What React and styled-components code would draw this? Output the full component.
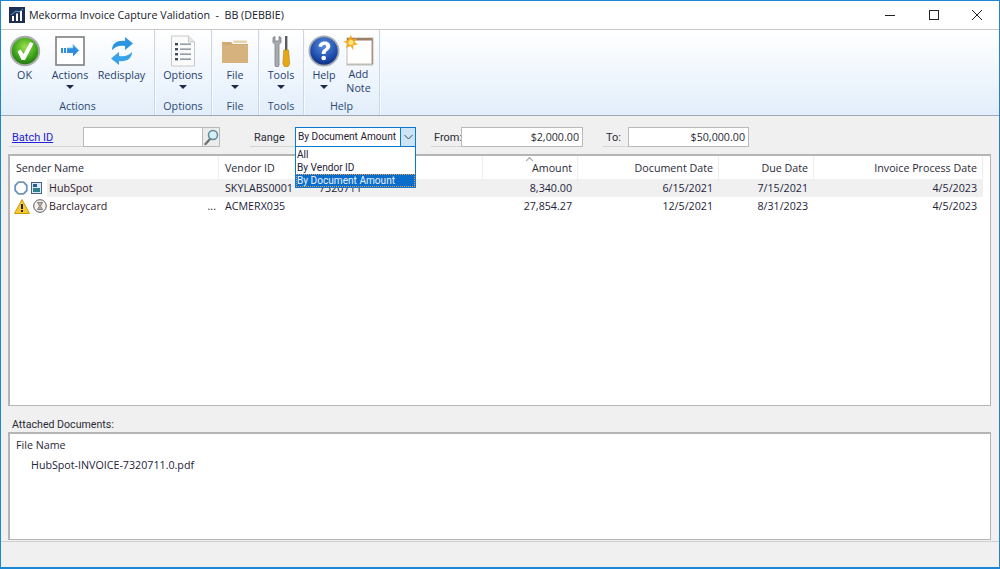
import React from "react";
import styled, { createGlobalStyle } from "styled-components";

const Global = createGlobalStyle`
  html, body { margin: 0; padding: 0; height: 100%; overflow: hidden; }
  body { font-family: "Open Sans", "Noto Sans", "Liberation Sans", sans-serif; font-size: 10.7px; color: #1f2333; }
  * { box-sizing: border-box; }
`;

const Window = styled.div`
  width: 1000px;
  height: 569px;
  display: flex;
  flex-direction: column;
  background: #f0f0f0;
  border: 1px solid #1c86d6;
  border-bottom-width: 2px;
`;

const TitleBar = styled.div`
  height: 29px;
  flex: none;
  display: flex;
  align-items: center;
  padding-left: 8px;
  background: #fff;
  border-bottom: 1px solid #c9c9c9;
`;

const AppTitle = styled.span`
  margin-left: 4px;
  font-size: 10.7px;
  color: #15192b;
  white-space: pre;
`;

const WinButtons = styled.div`
  margin-left: auto;
  display: flex;
  height: 100%;
`;

const WinButton = styled.div`
  width: 43.5px;
  display: flex;
  align-items: center;
  justify-content: center;
`;

const Ribbon = styled.div`
  height: 86px;
  flex: none;
  display: flex;
  background: linear-gradient(#ffffff, #e2eefb);
  border-bottom: 1px solid #9fa8b0;
`;

const Group = styled.div`
  width: ${(p) => p.$w}px;
  display: flex;
  flex-direction: column;
  border-right: 1px solid #cdd7e2;
  box-shadow: 1px 0 0 #f6f9fd;
`;

const Buttons = styled.div`
  height: 65px;
  flex: none;
  display: flex;
`;

const RibbonButton = styled.div`
  width: ${(p) => p.$w}px;
  padding-top: 4px;
  display: flex;
  flex-direction: column;
  align-items: center;
  color: #27406e;
  font-size: 10.7px;
  line-height: 14px;
  text-align: center;
`;

const IconSlot = styled.div`
  height: 34px;
  display: flex;
  align-items: center;
  justify-content: center;
`;

const Caret = styled.div`
  margin-top: 3px;
  width: 0;
  height: 0;
  border-left: 4px solid transparent;
  border-right: 4px solid transparent;
  border-top: 4px solid #1c2a4a;
`;

const GroupName = styled.div`
  height: 20px;
  text-align: center;
  line-height: 22px;
  color: #2c4a72;
  font-size: 10.7px;
`;

const Content = styled.div`
  flex: 1;
  display: flex;
  flex-direction: column;
  padding: 11px 8px 0 7px;
`;

const FilterRow = styled.div`
  height: 20px;
  flex: none;
  display: flex;
  align-items: stretch;
`;

const BatchLabel = styled.a`
  width: 74px;
  margin-left: 1px;
  padding-left: 3px;
  font-family: Roboto, "Liberation Sans", sans-serif;
  font-size: 11px;
  line-height: 21px;
  color: #2222d8;
  text-decoration: underline;
  border-bottom: 1px solid #d4d4d4;
`;

const TextField = styled.div`
  width: ${(p) => p.$w}px;
  height: 20px;
  padding: 0 3px;
  background: #fff;
  border: 1px solid #b9b9b9;
  text-align: right;
  line-height: 18px;
  color: #2a2a35;
`;

const SearchButton = styled.div`
  width: 17px;
  display: flex;
  align-items: center;
  justify-content: center;
  background: #ececec;
  border: 1px solid #b9b9b9;
  border-left: none;
`;

const FieldLabel = styled.div`
  width: ${(p) => p.$w}px;
  margin-left: ${(p) => p.$ml}px;
  padding-left: ${(p) => p.$pl}px;
  font-family: Roboto, "Liberation Sans", sans-serif;
  font-size: 11px;
  line-height: 21px;
  white-space: nowrap;
  border-bottom: 1px solid #d4d4d4;
  color: #2a2a35;
`;

const Combo = styled.div`
  position: relative;
  width: 121px;
  height: 20px;
  display: flex;
  background: #fff;
  border: 1px solid #0a78d2;
`;

const ComboValue = styled.div`
  flex: 1;
  padding-left: 2px;
  font-family: Roboto, "Liberation Sans", sans-serif;
  font-size: 10.1px;
  line-height: 17px;
  white-space: nowrap;
  overflow: hidden;
`;

const ComboArrow = styled.div`
  width: 15px;
  display: flex;
  align-items: center;
  justify-content: center;
  background: #cde4f7;
  border-left: 1px solid #0a78d2;
`;

const ComboList = styled.div`
  position: absolute;
  z-index: 5;
  top: 18px;
  left: -1px;
  width: 121px;
  height: 42px;
  padding-top: 1px;
  background: #fff;
  border: 1px solid #0a78d2;
`;

const ComboItem = styled.div`
  height: 13px;
  padding-left: 1px;
  font-family: Roboto, "Liberation Sans", sans-serif;
  font-size: 10.1px;
  line-height: 13px;
  color: ${(p) => (p.$selected ? "#e8f3ff" : "#1f2333")};
  background: ${(p) => (p.$selected ? "#0a6ccb" : "transparent")};
  outline: ${(p) => (p.$selected ? "1px dotted #e8a050" : "none")};
  outline-offset: -1px;
`;

const Panel = styled.div`
  background: #fff;
  border: 2px solid #b4b4b4;
  border-right-width: 1px;
  border-bottom-width: 1px;
`;

const GridPanel = styled(Panel)`
  margin-top: 7px;
  height: 252px;
  flex: none;
`;

const Row = styled.div`
  display: grid;
  grid-template-columns: 209px 94px 170px 95px 141px 95px 169px;
  height: ${(p) => p.$h}px;
`;

const HeadCell = styled.div`
  position: relative;
  padding: 0 ${(p) => (p.$right ? 5 : 6)}px;
  text-align: ${(p) => (p.$right ? "right" : "left")};
  line-height: 24px;
  white-space: nowrap;
  border-right: 1px solid #eeeeee;
  color: #2a2a38;
`;

const SortMark = styled.span`
  position: absolute;
  left: 44px;
  top: 2px;
  width: 5px;
  height: 5px;
  border-left: 1px solid #9a9a9a;
  border-top: 1px solid #9a9a9a;
  transform: rotate(45deg);
`;

const Cell = styled.div`
  padding: 0 6px;
  text-align: ${(p) => (p.$right ? "right" : "left")};
  line-height: 18px;
  white-space: nowrap;
  background: ${(p) => (p.$shade ? "#f0f0f0" : "transparent")};
  color: #23233a;
`;

const NameCell = styled.div`
  display: flex;
  line-height: 18px;
`;

const StatusIcons = styled.div`
  width: 37px;
  flex: none;
  display: flex;
  align-items: center;
  padding-left: 4px;
  gap: 3px;
`;

const NameText = styled.div`
  flex: 1;
  display: flex;
  justify-content: space-between;
  padding: 0 3px 0 2px;
  background: ${(p) => (p.$shade ? "#f0f0f0" : "transparent")};
  color: #33202e;
`;

const AttachLabel = styled.div`
  margin-top: 11px;
  margin-left: 4px;
  height: 15px;
  font-family: Roboto, "Liberation Sans", sans-serif;
  font-size: 10.6px;
  line-height: 15px;
  color: #2a2a35;
`;

const AttachPanel = styled(Panel)`
  height: 108px;
  flex: none;
  padding: 2px 6px;
`;

const AttachHead = styled.div`
  height: 21px;
  line-height: 18px;
  color: #2a2a38;
`;

const AttachFile = styled.div`
  padding: 1px 0 0 15px;
  color: #23233a;
`;

const StatusBar = styled.div`
  height: 26px;
  flex: none;
  border-top: 1px solid #d0d0d0;
`;

function Logo() {
  return (
    <svg width="16" height="16" viewBox="0 0 16 16">
      <rect width="16" height="16" fill="#1d2f52" />
      <path d="M3 14V9h2v5zM7 14V6.5h2V14zM11 14V4h2v10z" fill="#fff" />
      <path d="M2 8l5-4 3 1 4-3" stroke="#5aa7e0" fill="none" />
    </svg>
  );
}

function OkIcon() {
  return (
    <svg width="32" height="32" viewBox="0 0 32 32">
      <defs>
        <radialGradient id="okg" cx="50%" cy="35%" r="70%">
          <stop offset="0" stopColor="#9be04a" />
          <stop offset="0.6" stopColor="#3fa81c" />
          <stop offset="1" stopColor="#1c6e10" />
        </radialGradient>
      </defs>
      <circle cx="16" cy="16" r="15.2" fill="#a9aca8" />
      <circle cx="16" cy="16" r="13.2" fill="url(#okg)" />
      <path d="M8.5 16.5l3-2 3 4.5L21 7l3.6 1.4L16 25h-3.4z" fill="#fff" />
    </svg>
  );
}

function ActionsIcon() {
  return (
    <svg width="30" height="30" viewBox="0 0 30 30">
      <rect x="1" y="1" width="28" height="28" fill="#fff" stroke="#7f7f7f" strokeWidth="1.6" />
      <path d="M6 12h2v5H6zM9 12h2v5H9zM12 12h6V8.5l6 6-6 6V17h-6z" fill="#2f8fdc" />
      <path d="M12 12h6V8.5l6 6" fill="none" stroke="#7cc4f2" strokeWidth="0.8" />
    </svg>
  );
}

function RedisplayIcon() {
  return (
    <svg width="24" height="30" viewBox="0 0 24 30">
      <path d="M2 14C2 7 8 4 15 5V1l8 6.500-8 6.500V10c-5-1-9 0-13 4z" fill="#2b95e0" />
      <path d="M22 16c0 7-6 10-13 9v4l-8-6.500L9 16v4c5 1 9 0 13-4z" fill="#3aa3e8" />
    </svg>
  );
}

function OptionsIcon() {
  return (
    <svg width="26" height="32" viewBox="0 0 26 32">
      <path d="M1.500 1h17l6 6v24h-23z" fill="#fbfbfb" stroke="#c9c9c9" />
      <path d="M18.500 1v6h6" fill="#e6e6e6" stroke="#c9c9c9" />
      {[8, 13, 18, 23].map((y) => (
        <g key={y}>
          <rect x="5" y={y} width="3" height="2.400" fill="#3c4a5e" />
          <rect x="10" y={y + 0.5} width="11" height="1.300" fill="#7b8794" />
        </g>
      ))}
    </svg>
  );
}

function FileIcon() {
  return (
    <svg width="26" height="24" viewBox="0 0 26 24">
      <path d="M0 3h9l2 2h15v19H0z" fill="#cfa970" />
      <path d="M11 1.500h14V4H12z" fill="#e6d3ae" />
      <rect y="6" width="26" height="18" fill="#d6b27e" />
    </svg>
  );
}

function ToolsIcon() {
  return (
    <svg width="20" height="31" viewBox="0 0 20 31">
      <path d="M2 1.500v5l2 2V29a2 2 0 0 0 4 0V8.500l2-2v-5L8 .500v4.500H4V.500z" fill="#a9adb0" stroke="#6f7478" strokeWidth="0.700" />
      <rect x="14" y="0" width="2.400" height="14" fill="#5c5c5c" />
      <path d="M12.800 14h4.800l1.200 14-2 3h-3l-2-3z" fill="#e5a814" stroke="#a8780c" strokeWidth="0.500" />
    </svg>
  );
}

function HelpIcon() {
  return (
    <svg width="32" height="32" viewBox="0 0 32 32">
      <defs>
        <radialGradient id="hg" cx="50%" cy="30%" r="75%">
          <stop offset="0" stopColor="#5b8ee0" />
          <stop offset="0.7" stopColor="#1a49a8" />
          <stop offset="1" stopColor="#0e2b74" />
        </radialGradient>
      </defs>
      <circle cx="16" cy="16" r="15.500" fill="#a8acb2" />
      <circle cx="16" cy="16" r="13.700" fill="url(#hg)" />
      <path d="M10.500 11.500c.5-3.500 3-5 6-5 3.500 0 5.800 2 5.800 4.800 0 4-4.800 4-4.800 7.700h-3.800c0-5 4.500-5 4.500-7.500 0-1-.7-1.800-1.900-1.800-1.300 0-2 .8-2.200 2.300z" fill="#fff" />
      <circle cx="15.700" cy="23" r="2.300" fill="#fff" />
    </svg>
  );
}

function NoteIcon() {
  return (
    <svg width="31" height="31" viewBox="0 0 31 31">
      <rect x="4" y="3" width="26" height="26" fill="#fff" stroke="#c4bcae" />
      <rect x="4" y="3" width="26" height="2.500" fill="#9c7f66" />
      <rect x="28.500" y="3" width="1.500" height="26" fill="#a89684" />
      <path d="M4 29h26v1.500H3z" fill="#bdbdb8" />
      <path d="M8 0l1.600 4.500L14 3l-2.500 4L15 9.500l-4.500.6L10 15 7.500 11 3 13l1.500-4.500L0 6.500l4.500-1z" fill="#f6a81c" />
      <circle cx="8" cy="7.500" r="2.500" fill="#ffe680" />
    </svg>
  );
}

function Magnifier() {
  return (
    <svg width="15" height="17" viewBox="0 0 15 17">
      <path d="M6 10L1.500 15" stroke="#6e7276" strokeWidth="2.400" strokeLinecap="round" />
      <circle cx="9" cy="6" r="4.500" fill="#d8eef8" stroke="#5c8a96" strokeWidth="1.500" />
    </svg>
  );
}

function ChevronDown() {
  return (
    <svg width="9" height="6" viewBox="0 0 9 6">
      <path d="M.5 1l4 4 4-4" fill="none" stroke="#3b4b5c" strokeWidth="1" />
    </svg>
  );
}

function RingIcon() {
  return (
    <svg width="14" height="14" viewBox="0 0 14 14">
      <path d="M4.500 1.200h5l3.300 3.300v5l-3.300 3.300h-5L1.200 9.500v-5z" fill="#fff" stroke="#6f95ba" strokeWidth="1.800" strokeLinejoin="round" />
    </svg>
  );
}

function DocIcon() {
  return (
    <svg width="11" height="12" viewBox="0 0 11 12">
      <rect x="0.500" y="0.500" width="10" height="11" fill="#dfeaf2" stroke="#40648a" />
      <rect x="2" y="2" width="4" height="3" fill="#1f5d9b" />
      <rect x="2" y="6" width="7" height="4" fill="#2f7f8c" />
    </svg>
  );
}

function WarnIcon() {
  return (
    <svg width="16" height="15" viewBox="0 0 16 15">
      <path d="M8 .500l7.500 14H.5z" fill="#f6c92c" stroke="#c99a10" />
      <rect x="7" y="5" width="2" height="5" fill="#222" />
      <rect x="7" y="11" width="2" height="2" fill="#222" />
    </svg>
  );
}

function HourglassIcon() {
  return (
    <svg width="14" height="14" viewBox="0 0 14 14">
      <circle cx="7" cy="7" r="6.300" fill="#f7f3ec" stroke="#55595e" />
      <path d="M4.500 3.500h5L7.500 7l2 3.500h-5l2-3.500z" fill="#d9a98a" stroke="#5a6f8c" strokeWidth="0.800" />
    </svg>
  );
}

const groups = [
  { name: "Actions", w: 154, buttons: [
    { label: "OK", w: 47, icon: <OkIcon /> },
    { label: "Actions", w: 44, icon: <ActionsIcon />, caret: true },
    { label: "Redisplay", w: 59, icon: <RedisplayIcon /> },
  ] },
  { name: "Options", w: 57, buttons: [{ label: "Options", w: 56, icon: <OptionsIcon />, caret: true }] },
  { name: "File", w: 47, buttons: [{ label: "File", w: 46, icon: <FileIcon />, caret: true }] },
  { name: "Tools", w: 45, buttons: [{ label: "Tools", w: 44, icon: <ToolsIcon />, caret: true }] },
  { name: "Help", w: 76, buttons: [
    { label: "Help", w: 40, icon: <HelpIcon />, caret: true },
    { label: "Add\nNote", w: 29, icon: <NoteIcon /> },
  ] },
];

const columns = [
  { title: "Sender Name" },
  { title: "Vendor ID" },
  { title: "" },
  { title: "Amount", right: true, sorted: true },
  { title: "Document Date", right: true },
  { title: "Due Date", right: true },
  { title: "Invoice Process Date", right: true },
];

const rows = [
  { icons: [<RingIcon key="a" />, <DocIcon key="b" />], name: "HubSpot", cells: ["SKYLABS0001", "7320711", "8,340.00", "6/15/2021", "7/15/2021", "4/5/2023"], shade: true },
  { icons: [<WarnIcon key="a" />, <HourglassIcon key="b" />], name: "Barclaycard", more: true, cells: ["ACMERX035", "", "27,854.27", "12/5/2021", "8/31/2023", "4/5/2023"] },
];

export default function App() {
  return (
    <>
      <Global />
      <Window>
        <TitleBar>
          <Logo />
          <AppTitle>Mekorma Invoice Capture Validation  -  BB (DEBBIE)</AppTitle>
          <WinButtons>
            <WinButton>
              <svg width="10" height="10"><path d="M0 5.500h10" stroke="#222" /></svg>
            </WinButton>
            <WinButton>
              <svg width="10" height="10"><rect x=".5" y=".5" width="9" height="9" fill="none" stroke="#222" /></svg>
            </WinButton>
            <WinButton>
              <svg width="10" height="10"><path d="M0 0l10 10M10 0L0 10" stroke="#222" /></svg>
            </WinButton>
          </WinButtons>
        </TitleBar>
        <Ribbon>
          {groups.map((g) => (
            <Group key={g.name} $w={g.w}>
              <Buttons>
                {g.buttons.map((b) => (
                  <RibbonButton key={b.label} $w={b.w}>
                    <IconSlot>{b.icon}</IconSlot>
                    {b.label.split("\n").map((l) => <div key={l}>{l}</div>)}
                    {b.caret && <Caret />}
                  </RibbonButton>
                ))}
              </Buttons>
              <GroupName>{g.name}</GroupName>
            </Group>
          ))}
        </Ribbon>
        <Content>
          <FilterRow>
            <BatchLabel>Batch ID</BatchLabel>
            <TextField $w={120} />
            <SearchButton><Magnifier /></SearchButton>
            <FieldLabel $w={45} $ml={30} $pl={4}>Range</FieldLabel>
            <Combo>
              <ComboValue>By Document Amount</ComboValue>
              <ComboArrow><ChevronDown /></ComboArrow>
              <ComboList>
                <ComboItem>All</ComboItem>
                <ComboItem>By Vendor ID</ComboItem>
                <ComboItem $selected>By Document Amount</ComboItem>
              </ComboList>
            </Combo>
            <FieldLabel $w={30} $ml={15} $pl={3}>From:</FieldLabel>
            <TextField $w={122}>$2,000.00</TextField>
            <FieldLabel $w={25} $ml={20} $pl={3}>To:</FieldLabel>
            <TextField $w={121}>$50,000.00</TextField>
          </FilterRow>
          <GridPanel>
            <Row $h={23}>
              {columns.map((c, i) => (
                <HeadCell key={i} $right={c.right}>
                  {c.sorted && <SortMark />}
                  {c.title}
                </HeadCell>
              ))}
            </Row>
            {rows.map((r) => (
              <Row key={r.name} $h={18}>
                <NameCell>
                  <StatusIcons>{r.icons}</StatusIcons>
                  <NameText $shade={r.shade}>
                    <span>{r.name}</span>
                    {r.more && <span>...</span>}
                  </NameText>
                </NameCell>
                {r.cells.map((c, i) => (
                  <Cell key={i} $right={i > 1} $shade={r.shade}>{c}</Cell>
                ))}
              </Row>
            ))}
          </GridPanel>
          <AttachLabel>Attached Documents:</AttachLabel>
          <AttachPanel>
            <AttachHead>File Name</AttachHead>
            <AttachFile>HubSpot-INVOICE-7320711.0.pdf</AttachFile>
          </AttachPanel>
        </Content>
        <StatusBar />
      </Window>
    </>
  );
}
